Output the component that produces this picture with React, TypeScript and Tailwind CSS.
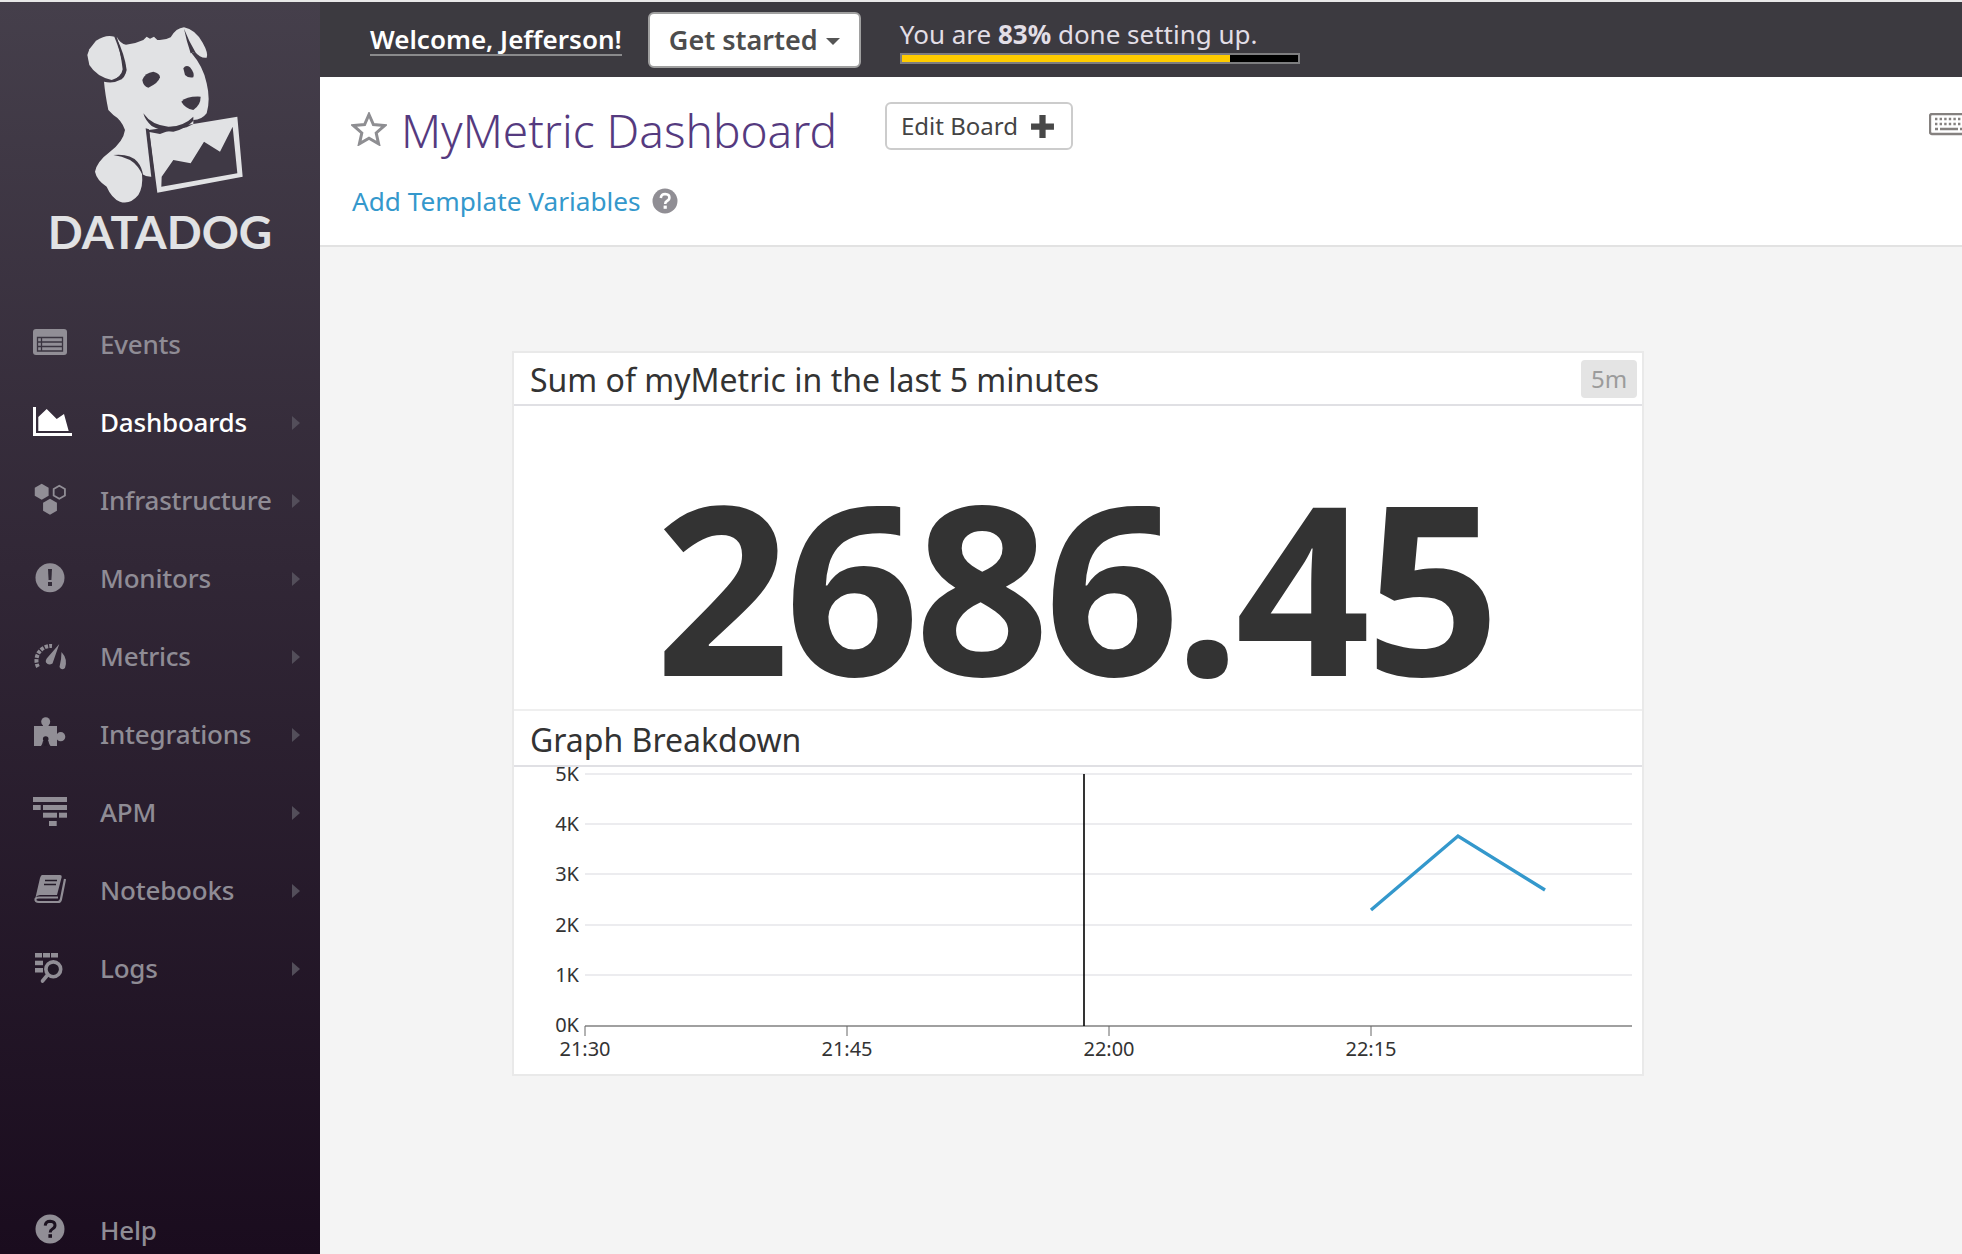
import React from 'react';

const Hex = ({ cx, cy, r, ...rest }: { cx: number; cy: number; r: number } & React.SVGProps<SVGPolygonElement>) => {
  const pts = [0, 60, 120, 180, 240, 300]
    .map((a) => {
      const t = ((a - 90) * Math.PI) / 180;
      return `${cx + r * Math.cos(t)},${cy + r * Math.sin(t)}`;
    })
    .join(' ');
  return <polygon points={pts} {...rest} />;
};

const GRAY = '#918e96';

const icons: Record<string, React.ReactNode> = {
  Events: (
    <>
      <rect x="1" y="2" width="34" height="26" rx="3" fill={GRAY} />
      <path d="M5.5 10.5H30.5V24H5.5ZM5.5 15H30.5M5.5 19.5H30.5M9.5 10.5V24" stroke="#3a3440" strokeWidth="1.3" fill="none" />
    </>
  ),
  Dashboards: (
    <>
      <path d="M1 2H4V28H40V31H1Z" fill="#fff" />
      <path d="M6.3 26V12L14.7 4L24.7 14L32 9L36.7 26Z" fill="#fff" />
    </>
  ),
  Infrastructure: (
    <>
      <Hex cx={9.7} cy={8.7} r={8} fill={GRAY} />
      <Hex cx={27.3} cy={9.3} r={6.5} fill="none" stroke={GRAY} strokeWidth="1.8" />
      <Hex cx={18} cy={23.7} r={8} fill={GRAY} />
    </>
  ),
  Monitors: (
    <>
      <circle cx="18" cy="16.7" r="14.5" fill={GRAY} />
      <path d="M16 8H20L19.4 19H16.6Z" fill="#322b38" />
      <rect x="16" y="21" width="4" height="4" fill="#322b38" />
    </>
  ),
  Metrics: (
    <>
      <path d="M6 28A14.5 14.5 0 0 1 20 7" fill="none" stroke={GRAY} strokeWidth="4" strokeDasharray="3.4 1.2" />
      <path d="M27.3 5L20.5 24.5Q16.5 27 14 23.5Q13 21 16 18Z" fill={GRAY} />
      <path d="M29.5 13Q36 20 33 29Q29.5 32 27.5 28Q29.5 20 29.5 13Z" fill={GRAY} />
    </>
  ),
  Integrations: (
    <>
      <path d="M2 9H11V7H16.5V9H25V17H27V22H25V29H18.5Q17 27 16.4 24H11Q10.4 27 9 29H2Z" fill={GRAY} />
      <circle cx="13.7" cy="4.7" r="4.5" fill={GRAY} />
      <circle cx="28.7" cy="19.7" r="4.6" fill={GRAY} />
      <circle cx="13.7" cy="22" r="2.8" fill="#251c2a" />
      <path d="M12.6 23H14.8L15.5 29H11.9Z" fill="#251c2a" />
    </>
  ),
  APM: (
    <g fill={GRAY}>
      <rect x="1" y="2" width="34" height="5" />
      <rect x="1" y="10" width="7.7" height="5" />
      <rect x="11" y="10" width="24" height="5" />
      <rect x="11" y="17.7" width="14" height="5" />
      <rect x="27" y="17.7" width="8" height="5" />
      <rect x="17" y="26" width="7.7" height="5" />
    </g>
  ),
  Notebooks: (
    <>
      <path d="M10 2H28Q30 2 29.7 4L25 22H8Q5 22 3.5 24.5L8 5Q9 2 10 2Z" fill={GRAY} />
      <path d="M33 6L29 26Q28.5 29 26 29H7Q3 29 3.5 26Q4 24.5 7 24.5H26" fill="none" stroke={GRAY} strokeWidth="2.2" />
      <path d="M13 7.5H25M12 11.5H24" stroke="#221a27" strokeWidth="1.6" />
    </>
  ),
  Logs: (
    <>
      <g fill={GRAY}>
        <rect x="3" y="2" width="7" height="4.5" />
        <rect x="11" y="2" width="7" height="4.5" />
        <rect x="19" y="2" width="7" height="4.5" />
        <rect x="3" y="9.7" width="8" height="4.5" />
        <rect x="3" y="17" width="8" height="4.5" />
      </g>
      <circle cx="21.3" cy="18.3" r="7.4" fill="#211826" stroke={GRAY} strokeWidth="3.6" />
      <path d="M15.5 24L10.5 30" stroke={GRAY} strokeWidth="3.6" strokeLinecap="round" />
    </>
  ),
  Help: (
    <>
      <circle cx="18" cy="16" r="14.5" fill={GRAY} />
      <path d="M13.2 12.6Q13.6 8.2 18.2 8.2Q23 8.4 23 12.2Q23 14.6 20.4 16Q18.2 17.2 18.2 19.4" fill="none" stroke="#1c1220" strokeWidth="3" />
      <rect x="16.4" y="21.2" width="3.6" height="3.6" fill="#1c1220" />
    </>
  ),
};

const navItems = [
  { label: 'Events', arrow: false },
  { label: 'Dashboards', arrow: true, active: true },
  { label: 'Infrastructure', arrow: true },
  { label: 'Monitors', arrow: true },
  { label: 'Metrics', arrow: true },
  { label: 'Integrations', arrow: true },
  { label: 'APM', arrow: true },
  { label: 'Notebooks', arrow: true },
  { label: 'Logs', arrow: true },
];

const NavIcon = ({ name }: { name: string }) => (
  <svg viewBox="0 0 40 36" width="40" height="36" className="shrink-0 overflow-visible">
    {icons[name]}
  </svg>
);

const NavRow = ({ label, arrow, active }: { label: string; arrow?: boolean; active?: boolean }) => (
  <div className="flex h-[78px] items-center pl-[32px]">
    <NavIcon name={label} />
    <span className={`ml-[28px] mt-[-2px] text-[26px] font-medium tracking-[-0.2px] ${active ? 'text-white' : 'text-[#8f8c95]'}`}>
      {label}
    </span>
    {arrow && (
      <div className="ml-auto mr-[20px] h-0 w-0 border-y-[7px] border-l-[8px] border-y-transparent border-l-[#534e5a]" />
    )}
  </div>
);

const DogLogo = () => (
  <svg viewBox="0 0 510 570" width="170" height="190" className="ml-[80px] block">
    <g fill="#e1e2e4">
      {/* left ear */}
      <path d="M22 105L28 88L48 62Q78 42 103 50Q122 95 132 148Q125 172 95 180Q50 170 28 135Z" />
      {/* head, neck and paw */}
      <path d="M110 50Q122 72 138 74Q165 72 190 60L200 50L210 56L222 50L232 60Q255 62 272 52Q288 24 312 22Q345 28 368 68Q386 100 380 113Q360 115 345 95L335 100Q370 140 380 190Q392 240 380 280Q365 300 340 300L340 312L206 330L218 470Q200 472 186 462Q190 500 175 525Q150 555 120 545Q95 535 80 500Q50 480 45 455Q50 425 90 395Q130 365 135 330Q125 300 100 285L85 270Q75 220 72 185Q100 192 125 178Q142 165 136 135Z" />
      {/* chart */}
      <path d="M208 336L240 342Q270 330 320 322L340 312L472 290L488 470L232 518Z" />
    </g>
    <g fill="#3f3945">
      <path d="M108 50Q135 105 140 150Q135 178 92 186Q125 170 128 148Q122 95 108 50Z" />
      <path d="M312 26Q320 65 332 100L346 96Q326 62 312 26Z" />
      <path d="M187 180Q195 158 220 155Q240 160 240 172Q235 190 205 203Q190 200 187 180Z" />
      <path d="M310 145Q318 133 330 142Q345 160 340 172Q325 175 315 165Z" />
      <path d="M304 245Q320 228 362 230Q362 255 340 270Q315 265 304 245Z" />
      <path d="M190 280Q215 316 265 320Q310 320 340 290L340 302Q320 325 280 335Q245 335 215 318Q195 300 190 280Z" />
      <path d="M100 405Q150 400 172 425Q187 442 190 470Q175 435 150 420Q125 408 100 405Z" />
      <path d="M197 325L207 328L224 470L214 472Z" />
      <path d="M245 470L280 420L332 430L372 365L420 395L458 320L472 460L244 500Z" />
    </g>
  </svg>
);

const Sidebar = () => (
  <aside className="flex h-full w-[320px] shrink-0 flex-col bg-gradient-to-b from-[#453f4b] to-[#1a0c1e]">
    <div className="pt-[18px]">
      <DogLogo />
      <div className="h-[46px] text-center font-['Lato',sans-serif] text-[46px] font-bold leading-[44px] text-[#e1e2e4]">
        DATADOG
      </div>
    </div>
    <nav className="mt-[50px]">
      {navItems.map((item) => (
        <NavRow key={item.label} {...item} />
      ))}
    </nav>
    <div className="mt-auto flex h-[46px] items-center pl-[32px]">
      <NavIcon name="Help" />
      <span className="ml-[28px] mt-[-2px] text-[26px] font-medium tracking-[-0.2px] text-[#8f8c95]">Help</span>
    </div>
  </aside>
);

const TopBar = () => (
  <div className="flex h-[75px] shrink-0 items-center bg-[#3c3a40] pl-[50px]">
    <span className="border-b-2 border-[#8a8a8c] text-[26px] font-semibold leading-[30px] text-white">
      Welcome, Jefferson!
    </span>
    <button className="ml-[26px] flex h-[56px] w-[213px] items-center justify-center rounded-[6px] border-2 border-[#a0a0a0] bg-white pt-[1px] text-[27px] font-semibold text-[#4d4d4d]">
      Get started
      <span className="ml-[8px] mt-[3px] h-0 w-0 border-x-[7px] border-t-[7px] border-x-transparent border-t-[#555]" />
    </button>
    <div className="ml-[39px] mt-[2px] w-[400px]">
      <div className="text-[26px] leading-[34px] text-[#e2dee6]">
        You are <span className="font-bold">83%</span> done setting up.
      </div>
      <div className="mt-[2px] h-[11px] border-2 border-[#7e7e80] bg-black">
        <div className="h-full w-[83%] bg-[#ffcc00]" />
      </div>
    </div>
  </div>
);

const BoardHeader = () => (
  <div className="h-[170px] shrink-0 border-b-2 border-[#e2e2e2] bg-white pl-[31px]">
    <div className="flex items-start pt-[25px]">
      <svg viewBox="0 0 36 34" width="36" height="34" className="mt-[10px] shrink-0">
        <path d="M18 2.5L22.4 12.6L33.5 13.6L25.2 21L27.6 31.8L18 26.2L8.4 31.8L10.8 21L2.5 13.6L13.6 12.6Z" fill="none" stroke="#8e8e92" strokeWidth="3" />
      </svg>
      <h1 className="ml-[14px] text-[46px] font-light leading-[56px] text-[#553a7f]">MyMetric Dashboard</h1>
      <button className="ml-[48px] flex h-[48px] w-[188px] items-center rounded-[6px] border-2 border-[#ccc] pl-[14px] text-[24px] text-[#444]">
        Edit Board
        <svg viewBox="0 0 24 24" width="25" height="25" className="ml-[12px]">
          <path d="M9 1H15V9H23V15H15V23H9V15H1V9H9Z" fill="#484848" />
        </svg>
      </button>
      <svg viewBox="0 0 40 24" width="40" height="24" className="ml-auto mr-[-7px] mt-[11px] shrink-0">
        <rect x="1" y="1" width="38" height="20" rx="2" fill="#fff" stroke="#85817f" strokeWidth="2.4" />
        <path d="M6 6H34M6 11H34" stroke="#85817f" strokeWidth="2.4" strokeDasharray="2.4 2.2" />
        <path d="M6 16H9M11 16H29M31 16H34" stroke="#85817f" strokeWidth="2.4" />
      </svg>
    </div>
    <div className="ml-[1px] mt-[25px] flex items-center">
      <span className="text-[26.2px] leading-[36px] text-[#3498cc]">Add Template Variables</span>
      <svg viewBox="0 0 26 26" width="26" height="26" className="ml-[11px]">
        <circle cx="13" cy="13" r="12.5" fill="#908e94" />
        <path d="M8.8 10Q9.2 6 13.2 6Q17.4 6.2 17.4 9.6Q17.4 11.8 15 13Q13.2 14 13.2 16" fill="none" stroke="#fff" strokeWidth="2.6" />
        <rect x="11.6" y="17.6" width="3.2" height="3.2" fill="#fff" />
      </svg>
    </div>
  </div>
);

const gridY = [
  { label: '5K', y: 7 },
  { label: '4K', y: 57 },
  { label: '3K', y: 107 },
  { label: '2K', y: 158 },
  { label: '1K', y: 208 },
];

const ticks = [
  { label: '21:30', x: 70 },
  { label: '21:45', x: 332 },
  { label: '22:00', x: 594 },
  { label: '22:15', x: 856 },
];

// chart origin is 515, 768 on the page; the viewBox starts 1px left of it
const BreakdownChart = () => (
  <svg viewBox="-1 0 1128 307" width="1128" height="307" className="block font-['Noto_Sans',sans-serif]">
    {gridY.map((g) => (
      <g key={g.label}>
        <line x1="70" x2="1117" y1={g.y} y2={g.y} stroke="#e6e6ea" strokeWidth="1.4" />
        <text x="64" y={g.y + 7} textAnchor="end" fontSize="20" fill="#333">
          {g.label}
        </text>
      </g>
    ))}
    <text x="64" y="265" textAnchor="end" fontSize="20" fill="#333">
      0K
    </text>
    <line x1="70" x2="1117" y1="259" y2="259" stroke="#808080" strokeWidth="1.6" />
    {ticks.map((t) => (
      <g key={t.label}>
        <line x1={t.x} x2={t.x} y1="259" y2="269" stroke="#666" strokeWidth="1" />
        <text x={t.x} y="289" textAnchor="middle" fontSize="20" fill="#333">
          {t.label}
        </text>
      </g>
    ))}
    <line x1="569" x2="569" y1="7" y2="259" stroke="#000" strokeWidth="1.6" />
    <polyline points="856,143 943,69 1030,123" fill="none" stroke="#3498cc" strokeWidth="3.4" />
  </svg>
);

const MetricCard = () => (
  <div className="ml-[192px] mt-[104px] w-[1132px] border-2 border-[#e9e9e9] bg-white">
    <div className="flex h-[53px] items-center justify-between border-b-2 border-[#e0e0e4] pl-[16px] pr-[5px]">
      <span className="pt-[3px] text-[32px] text-[#333]">Sum of myMetric in the last 5 minutes</span>
      <span className="flex h-[38px] w-[56px] items-center justify-center rounded-[4px] bg-[#e4e4e4] text-[24px] text-[#9b9b9b]">
        5m
      </span>
    </div>
    <div className="flex h-[305px] items-center justify-center border-b-2 border-[#efefef]">
      <span className="mr-[6px] mt-[55px] text-[236px] font-bold leading-[172px] tracking-[-0.022em] text-[#333]">2686.45</span>
    </div>
    <div className="flex h-[56px] items-center border-b-2 border-[#e0e0e4] pl-[16px]">
      <span className="pt-[3px] text-[32px] text-[#333]">Graph Breakdown</span>
    </div>
    <BreakdownChart />
  </div>
);

export default function App() {
  return (
    <div className="h-[1254px] w-[1962px] overflow-hidden bg-[#e8e8e8] pt-[2px] font-['Noto_Sans',sans-serif]">
      <div className="flex h-[1252px]">
        <Sidebar />
        <main className="flex min-w-0 flex-1 flex-col bg-[#f4f4f4]">
          <TopBar />
          <BoardHeader />
          <MetricCard />
        </main>
      </div>
    </div>
  );
}
